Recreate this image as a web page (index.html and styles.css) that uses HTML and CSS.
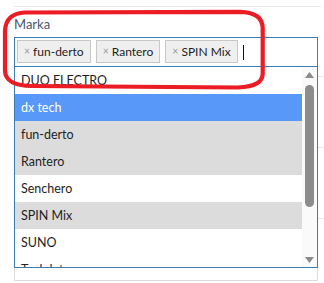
FILE: index.html
```html
<!DOCTYPE html>
<html>
<head>
<meta charset="utf-8">
<link rel="stylesheet" href="styles.css">
</head>
<body>
<div class="page">
  <div class="rule"></div>
  <div class="cols">
    <div class="main">
      <div class="label">Marka</div>
      <div class="combo">
        <div class="tags">
          <span class="tag"><span class="x">×</span>fun-derto</span>
          <span class="tag"><span class="x">×</span>Rantero</span>
          <span class="tag"><span class="x">×</span>SPIN Mix</span>
          <span class="caret"></span>
        </div>
        <div class="dropdown">
          <ul class="items">
            <li class="item">DUO ELECTRO</li>
            <li class="item active">dx tech</li>
            <li class="item selected">fun-derto</li>
            <li class="item selected">Rantero</li>
            <li class="item">Senchero</li>
            <li class="item selected">SPIN Mix</li>
            <li class="item">SUNO</li>
            <li class="item">Tech lyte</li>
          </ul>
          <div class="scrollbar">
            <svg class="arrow" width="9" height="6" viewBox="0 0 9 6"><path d="M4.5 0 L9 6 L0 6 Z" fill="#8a8a8a"/></svg>
            <div class="thumb"></div>
            <div class="track-rest"></div>
            <svg class="arrow" width="9" height="6" viewBox="0 0 9 6"><path d="M0 0 L9 0 L4.5 6 Z" fill="#8a8a8a"/></svg>
          </div>
        </div>
      </div>
      <div class="next-field"></div>
    </div>
    <div class="side">
      <div class="side-row r1"></div>
      <div class="side-row"></div>
      <div class="side-row"></div>
    </div>
  </div>
  <svg class="highlight" width="324" height="100" viewBox="0 0 324 100">
    <path d="M 25 12.5 L 240 11.8 Q 262.5 12.5 262.7 28 L 262.7 74 Q 262.5 86.5 238 87.5 L 32 86 Q 5.5 85.5 5 71 L 5 31 Q 5.5 13.5 25 12.5 Z" fill="none" stroke="#ec1c24" stroke-width="4.2"/>
  </svg>
</div>
</body>
</html>
```

FILE: styles.css
```css
html, body {
  margin: 0;
  padding: 0;
  background: #ffffff;
}
body {
  font-family: Lato, "Noto Sans", sans-serif;
  width: 324px;
  height: 283px;
  overflow: hidden;
}
.page {
  position: relative;
  padding: 6px 0 0 14px;
}
.rule {
  width: 307px;
  border-top: 1px solid #eaeaea;
}
.cols {
  display: flex;
}
.main {
  width: 304px;
}
.label {
  margin-top: 9px;
  font-size: 13px;
  line-height: 16px;
  color: #46566f;
  height: 16px;
}
.combo {
  position: relative;
  margin-top: 5px;
  width: 304px;
}
.tags {
  box-sizing: border-box;
  height: 30px;
  border: 1px solid #3b7db5;
  padding: 2px 2px 0 2px;
  display: flex;
  align-items: flex-start;
  gap: 5px;
}
.tag {
  display: inline-flex;
  align-items: center;
  height: 21px;
  border: 1px solid #c8c8c8;
  background: #efefef;
  padding: 0 6px 0 6px;
  font-size: 12px;
  color: #1e1e1e;
  line-height: 21px;
}
.x {
  color: #9a9a9a;
  font-size: 10.5px;
  margin-right: 3px;
}
.caret {
  width: 1px;
  height: 15px;
  background: #111;
  margin-top: 5px;
  margin-left: 0;
}
.dropdown {
  position: absolute;
  top: 100%;
  left: 0;
  width: 304px;
  height: 201px;
  box-sizing: border-box;
  border: 1px solid #3b7db5;
  border-top: none;
  background: #fff;
  display: flex;
  overflow: hidden;
  z-index: 2;
}
.items {
  list-style: none;
  margin: 0;
  padding: 0;
  width: 287px;
  flex: none;
}
.item {
  height: 27px;
  line-height: 27px;
  padding-left: 6px;
  font-size: 12.5px;
  color: #1e1e1e;
}
.item.active {
  background: #5898f8;
  color: #ffffff;
}
.item.selected {
  background: #dcdcdc;
}
.scrollbar {
  width: 15px;
  background: #fafafa;
  display: flex;
  flex-direction: column;
  align-items: center;
  padding-top: 5px;
  box-sizing: border-box;
}
.arrow {
  display: block;
  flex: none;
}
.thumb {
  width: 9px;
  height: 122px;
  margin-top: 7px;
  border-radius: 4.5px;
  background: #8c8c8c;
}
.track-rest {
  flex: 1;
}
.scrollbar .arrow:last-child {
  margin-bottom: 4px;
}
.next-field {
  margin-top: 201px;
  height: 12px;
  border: 1px solid #dcdcdc;
  border-top: none;
}
.side {
  width: 6px;
  display: flex;
  flex-direction: column;
}
.side-row {
  height: 70px;
  border-bottom: 1px solid #e6e6e6;
}
.side-row.r1 {
  height: 69px;
}
.highlight {
  position: absolute;
  left: 0;
  top: 0;
  z-index: 5;
  pointer-events: none;
}
```
